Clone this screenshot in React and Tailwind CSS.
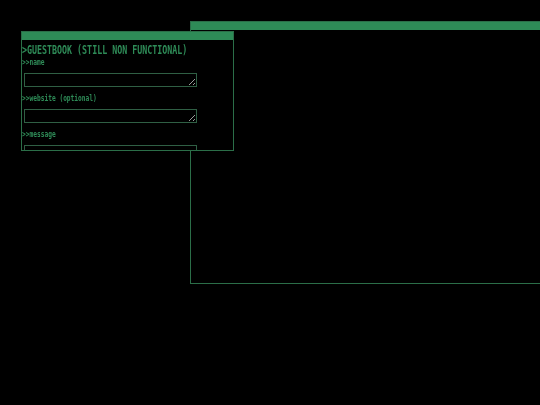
export default function App() {
  return (
    <div className="relative w-[540px] h-[405px] overflow-hidden bg-black font-['DejaVu_Sans_Mono',monospace] text-[#2e8b57]">
      {/* back window (empty) */}
      <div className="absolute left-[190px] top-[21px] w-[380px] h-[263px] border border-[#2b6e48] bg-black">
        <div className="h-[8px] bg-[#2e8b57]" />
      </div>

      {/* guestbook window */}
      <div className="absolute left-[21px] top-[31px] w-[213px] h-[120px] border border-[#2b6e48] bg-black overflow-hidden">
        <div className="h-[8px] bg-[#2e8b57]" />
        <div>
          <p className="mt-[2px] text-[13px] leading-[16px] font-bold whitespace-nowrap origin-left scale-x-[0.64]">
            &gt;GUESTBOOK (STILL NON FUNCTIONAL)
          </p>

          <p className="text-[9px] leading-[8px] font-bold whitespace-nowrap origin-left scale-x-[0.69]">
            &gt;&gt;name
          </p>
          <textarea className="block mt-[7px] ml-[2px] w-[173px] h-[14px] border border-[#2f5f44] bg-black outline-none" />

          <p className="mt-[7px] text-[9px] leading-[8px] font-bold whitespace-nowrap origin-left scale-x-[0.69]">
            &gt;&gt;website (optional)
          </p>
          <textarea className="block mt-[7px] ml-[2px] w-[173px] h-[14px] border border-[#2f5f44] bg-black outline-none" />

          <p className="mt-[7px] text-[9px] leading-[8px] font-bold whitespace-nowrap origin-left scale-x-[0.69]">
            &gt;&gt;message
          </p>
          <textarea className="block mt-[7px] ml-[2px] w-[173px] h-[60px] border border-[#2f5f44] bg-black outline-none" />
        </div>
      </div>
    </div>
  );
}
